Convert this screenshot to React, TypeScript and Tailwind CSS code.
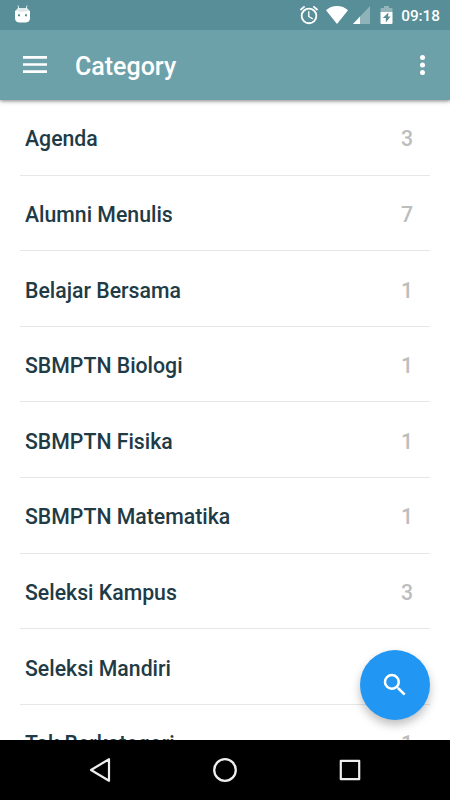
import React from 'react';

const categories = [
  { name: 'Agenda', count: 3 },
  { name: 'Alumni Menulis', count: 7 },
  { name: 'Belajar Bersama', count: 1 },
  { name: 'SBMPTN Biologi', count: 1 },
  { name: 'SBMPTN Fisika', count: 1 },
  { name: 'SBMPTN Matematika', count: 1 },
  { name: 'Seleksi Kampus', count: 3 },
  { name: 'Seleksi Mandiri', count: 1 },
  { name: 'Tak Berkategori', count: 1 },
];

function StatusBar() {
  return (
    <div className="z-20 flex h-[30px] shrink-0 items-center bg-[#578e97] pr-[10px] pl-[15px] text-white">
      <svg width="15" height="18" viewBox="0 0 15 18" fill="currentColor" className="mb-[2px]">
        <path d="M3 .5l1 4M12 .5l-1 4" stroke="currentColor" strokeWidth="1" opacity=".85" />
        <path d="M3 3h9l2 2v2H1V5z" opacity=".8" />
        <path fillRule="evenodd" d="M0 6.2Q0 5 1 5.8Q7.500 7.500 14 5.800Q15 5 15 6.200V13q0 4-4 4.500H4Q0 17 0 13zM3 9.200v2h2v-2zM10 9.200v2h2v-2z" />
      </svg>
      <div className="ml-auto flex items-center">
        <svg width="22" height="22" viewBox="0 0 24 24" fill="currentColor" className="mr-[6px]">
          <path d="M22 5.720l-4.600-3.860-1.290 1.530 4.600 3.860L22 5.720zM7.880 3.390L6.600 1.860 2 5.710l1.290 1.530 4.590-3.850zM12.500 8H11v6l4.750 2.850.75-1.230-4-2.370V8zM12 4a9 9 0 1 0 0 18 9 9 0 0 0 0-18zm0 16a7 7 0 1 1 0-14 7 7 0 0 1 0 14z" />
        </svg>
        <svg width="22" height="18" viewBox="0 0 22 18" fill="currentColor" className="mr-[5px]">
          <path d="M11 18L0 4.300Q4.500 0 11 0T22 4.300z" />
        </svg>
        <svg width="17" height="18" viewBox="0 0 17 18" fill="currentColor" className="mr-[10px]">
          <path d="M17 0v18H0z" opacity=".33" />
          <path d="M7 10.600V18H0z" />
        </svg>
        <svg width="13" height="18" viewBox="0 0 13 18" fill="currentColor" className="mr-[8px]">
          <path d="M4 0h5v2h2.500q1 0 1 1v3H.5V3q0-1 1-1H4z" opacity=".35" />
          <path fillRule="evenodd" d="M.5 6h12v11q0 1-1 1h-10q-1 0-1-1zM8.500 6.500L2.800 12h3v4.500L10.500 10.500H8z" />
        </svg>
        <span className="pt-px text-[15.3px] leading-[30px] font-medium">09:18</span>
      </div>
    </div>
  );
}

function Toolbar() {
  return (
    <header className="z-10 flex h-[70px] shrink-0 items-center bg-[#6da1aa] pr-[25px] pl-[23px] text-white shadow-[0_1px_4px_rgba(0,0,0,0.5)]">
      <button aria-label="Menu" className="mb-px">
        <svg width="24" height="17" viewBox="0 0 24 17" fill="currentColor">
          <path d="M0 0h24v2.700H0zM0 7.200h24v2.600H0zM0 14.300h24V17H0z" />
        </svg>
      </button>
      <h1 className="mt-[3px] ml-7 text-[25px] leading-[30px] font-medium">Category</h1>
      <button aria-label="More" className="ml-auto">
        <svg width="5" height="20" viewBox="0 0 5 20" fill="currentColor">
          <circle cx="2.500" cy="2.500" r="2.500" />
          <circle cx="2.500" cy="10" r="2.500" />
          <circle cx="2.500" cy="17.500" r="2.500" />
        </svg>
      </button>
    </header>
  );
}

export default function App() {
  return (
    <div className="relative flex h-[800px] w-[450px] flex-col overflow-hidden bg-white font-[Roboto,sans-serif]">
      <StatusBar />
      <Toolbar />
      <main className="min-h-0 flex-1 overflow-hidden px-5">
        {categories.map((category) => (
          <div
            key={category.name}
            className="flex h-[75.6px] items-center justify-between border-b border-[#e7e7e7] pt-[4px] pr-[17px] pl-[5px] text-[21.25px] font-medium"
          >
            <span className="text-[#213b46]">{category.name}</span>
            <span className="text-[#bdbdbd]">{category.count}</span>
          </div>
        ))}
      </main>
      <button
        aria-label="Search"
        className="absolute right-5 bottom-20 flex size-[70px] items-center justify-center rounded-full bg-[#2196f3] text-white shadow-[0_5px_10px_rgba(0,0,0,0.25)]"
      >
        <svg width="30" height="30" viewBox="0 0 24 24" fill="currentColor">
          <path d="M15.500 14h-.79l-.28-.27A6.470 6.470 0 0 0 16 9.500 6.500 6.500 0 1 0 9.500 16c1.610 0 3.090-.59 4.230-1.570l.27.28v.79l5 4.990L20.490 19l-4.990-5zm-6 0a4.500 4.500 0 1 1 0-9 4.500 4.500 0 0 1 0 9z" />
        </svg>
      </button>
      <nav className="z-10 flex h-[60px] shrink-0 items-center bg-black pr-[88px] pl-[88px] text-[#eeeeee]">
        <svg width="24" height="26" viewBox="0 0 24 26" fill="none" stroke="currentColor" strokeWidth="2.200" strokeLinejoin="round">
          <path d="M21 2.200v21.600L3 13z" />
        </svg>
        <svg width="26" height="26" viewBox="0 0 26 26" fill="none" stroke="currentColor" strokeWidth="2.300" className="mx-auto">
          <circle cx="13" cy="13" r="10.800" />
        </svg>
        <svg width="24" height="24" viewBox="0 0 24 24" fill="none" stroke="currentColor" strokeWidth="2.200" strokeLinejoin="round">
          <rect x="2.800" y="2.800" width="18.400" height="18.400" />
        </svg>
      </nav>
    </div>
  );
}
